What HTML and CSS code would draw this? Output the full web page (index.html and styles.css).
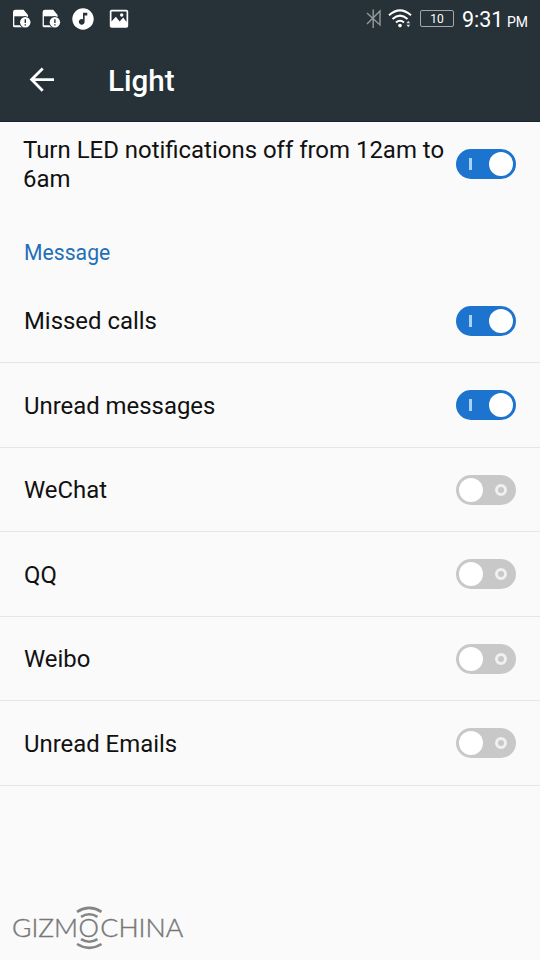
FILE: index.html
```html
<!DOCTYPE html>
<html lang="en">
<head>
<meta charset="utf-8">
<title>Light</title>
<link rel="stylesheet" href="styles.css">
</head>
<body>
<header class="header">
  <div class="status">
    <svg class="notices" width="140" height="38" viewBox="0 0 140 38">
      <g id="card">
        <path d="M15.5 9.8H23.6L28 15V26.5H14.3Q13 26.5 13 25.5V12Q13 9.8 15.5 9.8Z" fill="#fff"/>
        <path d="M14.3 16.3H26V25.5H14.3Z" fill="#263238"/>
        <path d="M13 25.4H24V27.3H14.5Q13 27.3 13 25.4Z" fill="#fff"/>
        <circle cx="25.3" cy="22.3" r="6" fill="#263238"/>
        <circle cx="25.3" cy="22.3" r="5.2" fill="#fff"/>
        <path d="M25.3 19.3V23M25.3 24.3V25.6" stroke="#263238" stroke-width="1.4"/>
      </g>
      <use href="#card" x="29.6"/>
      <circle cx="83" cy="19" r="10.7" fill="#fff"/>
      <path d="M83 12.7H87.3V15.5H84.6V21.7A2.9 2.9 0 1 1 83 19.2Z" fill="#263238"/>
      <rect x="109.8" y="9.8" width="18.4" height="18" rx="1.8" fill="#fff"/>
      <path d="M111.5 11.5H126.5V22L123.2 17.5L119.7 21.5L115.8 16.7L111.5 21.5Z" fill="#263238"/>
      <circle cx="121.7" cy="15" r="1.7" fill="#fff"/>
    </svg>
    <svg class="signals" width="60" height="38" viewBox="355 0 60 38">
      <path d="M367 13L380 25V11L367 24M373.2 9.5V28" fill="none" stroke="#929a9d" stroke-width="1.4"/>
      <g fill="none" stroke="#fff" stroke-width="2">
        <path d="M389 15.2Q400 5.5 411 15.2"/>
        <path d="M392.5 19Q400 12.2 407.5 19"/>
        <path d="M396 22.5Q400 19 404 22.5"/>
      </g>
      <circle cx="400" cy="25.6" r="1.8" fill="#fff"/>
      <path d="M406.4 23.2L408.3 20.8L410.2 23.2ZM406.4 24.8L408.3 27.2L410.2 24.8Z" fill="#d5dadc"/>
    </svg>
    <span class="battery">10</span>
    <span class="clock">9:31</span><span class="ampm">PM</span>
  </div>
  <div class="titlebar">
    <svg class="back" width="26" height="26" viewBox="29 67 26 26"><path d="M54 79.6H32M42.7 68.5L31.6 79.6L42.7 90.7" fill="none" stroke="#fff" stroke-width="2.8"/></svg>
    <h1>Light</h1>
  </div>
</header>
<main>
  <section class="lead"><span>Turn LED notifications off from 12am to 6am</span><i class="switch on"></i></section>
  <h2>Message</h2>
  <ul>
    <li><span>Missed calls</span><i class="switch on"></i></li>
    <li><span>Unread messages</span><i class="switch on"></i></li>
    <li><span>WeChat</span><i class="switch"></i></li>
    <li><span>QQ</span><i class="switch"></i></li>
    <li><span>Weibo</span><i class="switch"></i></li>
    <li><span>Unread Emails</span><i class="switch"></i></li>
  </ul>
</main>
<footer>
  <svg width="200" height="60" viewBox="0 900 200 60">
    <g class="logo">
      <text x="12" y="937" textLength="66" lengthAdjust="spacingAndGlyphs">GIZM</text>
      <text x="78.6" y="937" textLength="20.4" lengthAdjust="spacingAndGlyphs">O</text>
      <text x="100.3" y="937" textLength="83" lengthAdjust="spacingAndGlyphs">CHINA</text>
    </g>
    <g fill="none" stroke="#858585" stroke-width="2.6">
      <path d="M77 911.8Q89.3 904 101.5 911.8M81 916.8Q89.3 911.8 97.5 916.8"/>
      <path d="M81 939.2Q89.3 944.2 97.5 939.2M77 944Q89.3 951.8 101.5 944"/>
    </g>
  </svg>
</footer>
</body>
</html>
```
FILE: styles.css
```css
* { box-sizing: border-box; }
body {
  margin: 0;
  height: 960px;
  display: flex;
  flex-direction: column;
  background: #fafafa;
  color: #111;
  font: 24px/28.5px Roboto, sans-serif;
  overflow: hidden;
}
.header { height: 122px; flex: none; background: #263238; color: #fff; border-bottom: 1px solid #1b2529; }
.status { height: 38px; display: flex; align-items: center; }
.signals { margin-left: 215px; }
.battery {
  width: 34px;
  height: 17px;
  margin: 0 0 1px 5px;
  border: 1px solid #a0a8ab;
  border-radius: 2px;
  font-size: 12px;
  line-height: 16px;
  text-align: center;
}
.clock { margin: 2px 0 0 8px; font-size: 21.5px; width: 45px; white-space: nowrap; }
.ampm { margin-top: 6px; font-size: 14px; }
.titlebar { height: 84px; display: flex; align-items: center; padding: 0 0 1px 29px; }
h1 { margin: 2px 0 0 53px; font-size: 29.6px; line-height: 40px; font-weight: 500; }
.lead { height: 83px; display: flex; align-items: center; padding: 0 24px 0 23px; }
.lead span { flex: 1; padding-top: 2px; font-size: 23.95px; }
.lead .switch { margin-left: 9px; }
h2 { margin: 0; height: 73.6px; padding: 34px 24px 0; font-size: 21.2px; line-height: 28px; font-weight: 400; color: #1f6fb8; }
ul { margin: 0; padding: 0; list-style: none; }
li {
  height: 84.5px;
  display: flex;
  align-items: center;
  justify-content: space-between;
  padding: 1px 24px 0;
  border-bottom: 1px solid #e6e6e6;
}
li span { padding-top: 1.4px; font-size: 23.9px; }
.switch {
  position: relative;
  flex: none;
  width: 60px;
  height: 30px;
  border-radius: 15px;
  background: #c8c8c8;
}
.switch::before {
  content: "";
  position: absolute;
  left: 3px;
  top: 3px;
  width: 24px;
  height: 24px;
  border-radius: 50%;
  background: #fff;
}
.switch::after {
  content: "";
  position: absolute;
  left: 39px;
  top: 9px;
  width: 12px;
  height: 12px;
  box-sizing: border-box;
  border: 3px solid #f0f0f0;
  border-radius: 50%;
}
.switch.on { background: #1c74cf; }
.switch.on::before { left: 33px; }
.switch.on::after { left: 13px; width: 3px; border: 0; border-radius: 0; background: #a9d3f8; }
footer { margin-top: auto; height: 60px; }
footer svg { display: block; }
.logo { font: 300 25px Lato, sans-serif; fill: #777; stroke: #777; stroke-width: 0.4px; }
```
